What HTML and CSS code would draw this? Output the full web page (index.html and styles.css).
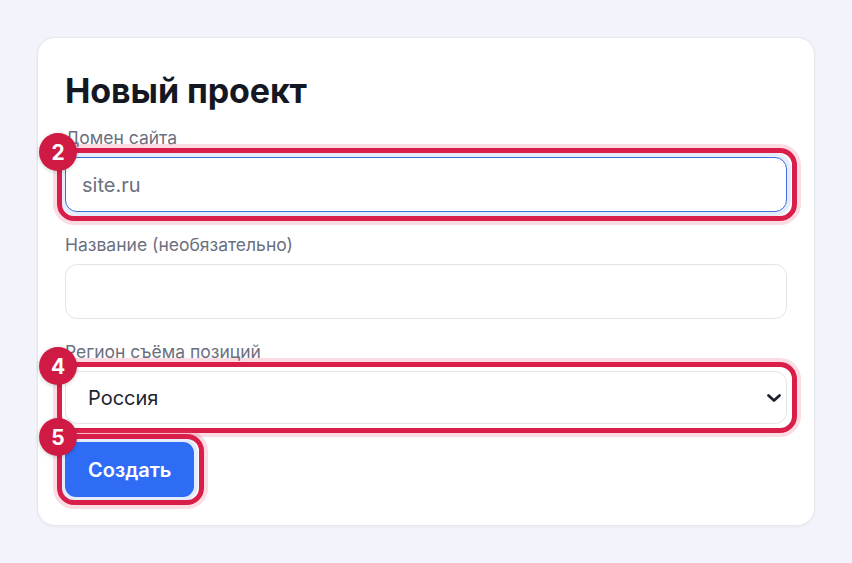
FILE: index.html
```html
<!DOCTYPE html>
<html lang="ru">
<head>
    <meta charset="UTF-8">
    <meta name="viewport" content="width=device-width, initial-scale=1.0">
    <title>Новый проект</title>
    <link rel="stylesheet" href="styles.css">
</head>
<body>
    <div class="page">
        <form class="card" action="#" method="post">
            <h1 class="title">Новый проект</h1>

            <div class="field">
                <label class="label" for="domain">Домен сайта</label>
                <div class="mark">
                    <input class="input input-focus" id="domain" name="domain" type="text" placeholder="site.ru">
                    <span class="ring"></span>
                    <span class="badge">2</span>
                </div>
            </div>

            <div class="field">
                <label class="label" for="name">Название (необязательно)</label>
                <input class="input" id="name" name="name" type="text">
            </div>

            <div class="field">
                <label class="label" for="region">Регион съёма позиций</label>
                <div class="mark">
                    <select class="input select" id="region" name="region">
                        <option>Россия</option>
                    </select>
                    <svg class="chevron" width="16" height="10" viewBox="0 0 16 10">
                        <path d="M2.5 2.5l5.5 5 5.5-5" fill="none" stroke="#1f2330" stroke-width="2.8" stroke-linecap="round" stroke-linejoin="round"/>
                    </svg>
                    <span class="ring"></span>
                    <span class="badge">4</span>
                </div>
            </div>

            <div class="actions">
                <div class="mark">
                    <button class="btn" type="submit">Создать</button>
                    <span class="ring ring-btn"></span>
                    <span class="badge">5</span>
                </div>
            </div>
        </form>
    </div>
</body>
</html>
```

FILE: styles.css
```css
* {
    box-sizing: border-box;
}
body {
    margin: 0;
    background-color: #f3f4fb;
    font-family: Inter, "Noto Sans", sans-serif;
    color: #141823;
}
.page {
    padding: 37px 37px 38px 37px;
}
.card {
    background-color: #ffffff;
    border: 1px solid #e6e7ee;
    border-radius: 18px;
    box-shadow: 0 1px 3px rgba(20, 24, 40, 0.05);
    padding: 33px 27px 28px 27px;
    display: flex;
    flex-direction: column;
}
.title {
    margin: 0 0 16px 0;
    font-size: 34px;
    line-height: 40px;
    font-weight: 700;
    letter-spacing: -0.1px;
    color: #141823;
}
.field {
    display: flex;
    flex-direction: column;
    margin-bottom: 22px;
}
.label {
    font-size: 17.5px;
    line-height: 22px;
    color: #6b7080;
    margin-bottom: 8px;
}
.mark {
    position: relative;
    display: flex;
}
.input {
    width: 100%;
    height: 55px;
    border: 1px solid #e3e4ea;
    border-radius: 12px;
    background-color: #ffffff;
    padding: 0 16px;
    font-family: inherit;
    font-size: 20px;
    color: #1f2330;
    outline: none;
}
.input::placeholder {
    color: #6b7080;
}
.input-focus {
    border-color: #3a6fdc;
    box-shadow: 0 0 0 4px #e4ecfd;
}
.select {
    height: 53px;
    -webkit-appearance: none;
    appearance: none;
    padding-left: 22px;
}
.chevron {
    position: absolute;
    right: 5px;
    top: 22px;
}
.actions {
    display: flex;
    margin-top: -4px;
}
.btn {
    height: 55px;
    padding: 0 23px;
    border: none;
    border-radius: 11px;
    background-color: #2f6cf5;
    color: #ffffff;
    font-family: inherit;
    font-size: 20px;
    font-weight: 600;
    box-shadow: 0 0 0 4px #e4ecfd;
}
.ring {
    position: absolute;
    top: -9px;
    left: -8px;
    right: -10px;
    bottom: -9px;
    border: 5px solid #d91f49;
    border-radius: 17px;
    box-shadow: 0 0 0 4px rgba(233, 60, 100, 0.18);
    pointer-events: none;
}
.ring-btn {
    top: -8px;
    bottom: -8px;
}
.badge {
    position: absolute;
    left: -26px;
    top: -24px;
    width: 38px;
    height: 38px;
    border-radius: 50%;
    background-color: #cf1a44;
    color: #ffffff;
    font-size: 21px;
    font-weight: 700;
    display: flex;
    align-items: center;
    justify-content: center;
    box-shadow: 0 1px 4px rgba(0, 0, 0, 0.2);
}
```
